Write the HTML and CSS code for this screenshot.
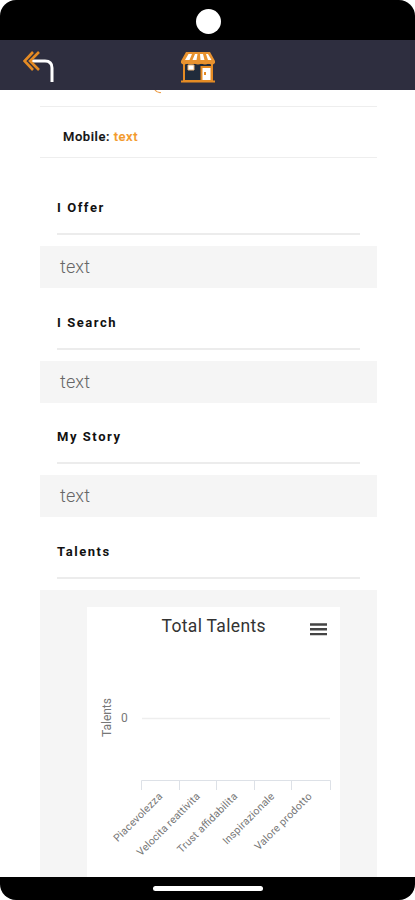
FILE: index.html
```html
<!DOCTYPE html>
<html lang="en">
<head>
<meta charset="utf-8">
<title>Profile</title>
<link rel="stylesheet" href="styles.css">
</head>
<body>
<div class="phone">
  <div class="status"><span class="camera"></span></div>
  <header class="header">
    <svg class="back" viewBox="0 0 32 32" fill="none">
      <path d="M7 10H22Q29 10 29 17V31" stroke="#fff" stroke-width="3"/>
      <path d="M10 1L1.500 10L10 19M16 1L7 10L16 19" stroke="#e58b24" stroke-width="2.600"/>
    </svg>
    <svg class="shop" viewBox="0 0 36 32">
      <path d="M4 12H32V30H4Z" fill="#202b3b" stroke="#e58b24" stroke-width="2"/>
      <path d="M6 1H30L35 10V12Q32 15 28.500 12Q25 15 21.500 12Q18 15 14.500 12Q11 15 7.500 12Q4 15 1 12V10Z" fill="#e8922f"/>
      <path d="M8.500 3H12L9.500 9H5ZM15 3H17.500L16.500 9H12.500ZM20 3H23L24.500 9H20.500ZM26 3H28L31.500 9H28Z" fill="#fff"/>
      <path d="M8 14H14V19H8Z" fill="#fff" stroke="#edb679"/>
      <path d="M21.500 16H31.500V30H21.500Z" fill="#fff" stroke="#e58b24" stroke-width="2"/>
      <path d="M25 21V24M1 30.500H35" stroke="#e58b24" stroke-width="2"/>
    </svg>
  </header>
  <main class="content">
    <div class="row row-cut">
      <svg class="descender" viewBox="0 0 8 4"><path d="M1 0Q3 3 7 2.500" fill="none" stroke="#ee9f4b" stroke-width="1.200"/></svg>
    </div>
    <div class="row"><b>Mobile: <span class="value">text</span></b></div>
    <div class="sections">
      <section><h2>I Offer</h2><div class="field">text</div></section>
      <section><h2>I Search</h2><div class="field">text</div></section>
      <section><h2>My Story</h2><div class="field">text</div></section>
      <section>
        <h2>Talents</h2>
        <div class="panel">
          <svg class="chart" viewBox="0 0 253 270">
            <text class="title" x="74.500" y="24.500" textLength="104">Total Talents</text>
            <path d="M223 17.500H240M223 22.300H240M223 27.100H240" stroke="#444" stroke-width="2.400"/>
            <path d="M55 111.500H243" stroke="#eee" stroke-width="1.500"/>
            <path d="M54.500 183V173.500H243.500V183M92.500 173.500V183M129.500 173.500V183M167.500 173.500V183M204.500 173.500V183" fill="none" stroke="#dde1e7"/>
            <g class="labels">
              <text transform="translate(24 130) rotate(-90)" textLength="39" class="axis">Talents</text>
              <text x="34" y="115" class="axis">0</text>
              <g text-anchor="end">
                <text transform="translate(76 190) rotate(-45)" textLength="64">Piacevolezza</text>
                <text transform="translate(113.500 190) rotate(-45)" textLength="84">Velocita reattivita</text>
                <text transform="translate(151 190) rotate(-45)" textLength="80">Trust affidabilita</text>
                <text transform="translate(188 190) rotate(-45)" textLength="68">Inspirazionale</text>
                <text transform="translate(225.500 190) rotate(-45)" textLength="76">Valore prodotto</text>
              </g>
            </g>
          </svg>
        </div>
      </section>
    </div>
  </main>
  <footer class="bottom"><span class="handle"></span></footer>
</div>
</body>
</html>
```
FILE: styles.css
```css
* { box-sizing: border-box; }
body { margin: 0; background: #fff; font-family: Roboto, "Liberation Sans", sans-serif; }
.phone { width: 415px; height: 900px; display: flex; flex-direction: column; overflow: hidden; }
.status { height: 40px; flex: none; background: #000; border-radius: 16px 16px 0 0; display: flex; justify-content: center; padding: 9px 0 0 1px; }
.camera { width: 25px; height: 25px; border-radius: 50%; background: #fff; }
.header { height: 50px; flex: none; background: #2e2e3f; display: flex; align-items: flex-start; padding: 11px 0 0 23px; }
.back { width: 32px; height: 32px; }
.shop { width: 36px; height: 32px; margin-left: 125px; }
.content { height: 787px; flex: none; overflow: hidden; padding: 0 38.500px 0 40px; }
.row { height: 51px; border-bottom: 1px solid #eee; padding: 0 23px; font-size: 13px; line-height: 59px; letter-spacing: 0.550px; color: #111; }
.row b { font-weight: 500; -webkit-text-stroke: 0.2px; }
.row-cut { height: 17px; padding-left: 114px; line-height: 0; }
.descender { width: 8px; height: 4px; }
.value { color: #f39a2c; }
.sections { padding-top: 15.500px; }
section { height: 114.500px; }
h2 { margin: 0 17px 11px; height: 61.500px; padding-top: 25.500px; border-bottom: 2px solid #ececec; font-size: 13px; line-height: 18px; letter-spacing: 1.550px; font-weight: 700; color: #111; }
.field { height: 42px; background: #f5f5f5; padding-left: 20px; font-size: 18px; line-height: 42px; font-weight: 300; color: #666; letter-spacing: 0.100px; }
.panel { height: 300px; background: #f5f5f5; padding: 17px 36px 0 47px; }
.chart { display: block; width: 253px; height: 270px; background: #fff; }
.chart text { font-family: Roboto, "Liberation Sans", sans-serif; }
.title { font-size: 17.500px; fill: #333; }
.labels { font-size: 10.500px; fill: #777; }
.axis { font-size: 12px; }
.bottom { height: 23px; background: #000; border-radius: 0 0 16px 16px; display: flex; justify-content: center; padding-top: 9px; }
.handle { width: 110px; height: 5px; border-radius: 3px; background: #fff; }
```
